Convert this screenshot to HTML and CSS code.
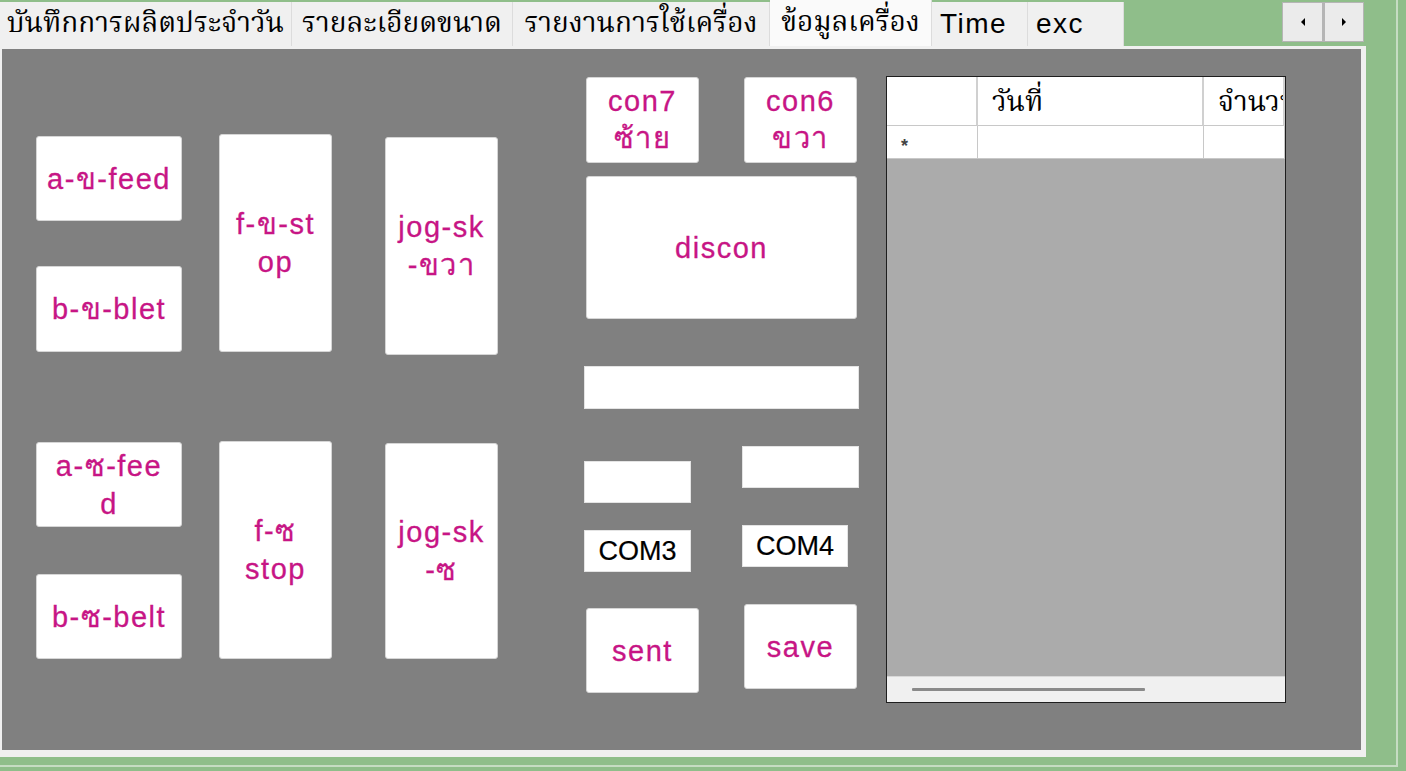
FILE: index.html
```html
<!DOCTYPE html>
<html lang="th">
<head>
<meta charset="utf-8">
<title>ข้อมูลเครื่อง</title>
<link rel="stylesheet" href="styles.css">
</head>
<body>
<div class="screen">
  <div class="tabbar">
    <div class="tab w1">บันทึกการผลิตประจำวัน</div>
    <div class="tab w2">รายละเอียดขนาด</div>
    <div class="tab w3">รายงานการใช้เครื่อง</div>
    <div class="tab w4 sel">ข้อมูลเครื่อง</div>
    <div class="tab w5 latin">Time</div>
    <div class="tab w6 latin">exc</div>
    <div class="spacer"></div>
    <div class="scroller">
      <div class="sbtn"><svg width="6" height="8" viewBox="0 0 6 8"><path d="M5 0 L1 4 L5 8 Z" fill="#000"/></svg></div>
      <div class="sbtn"><svg width="6" height="8" viewBox="0 0 6 8"><path d="M1 0 L5 4 L1 8 Z" fill="#000"/></svg></div>
    </div>
  </div>
  <div class="panel">
    <div class="canvas">
      <div class="col col1">
        <div class="btn b-a1">a-ข-feed</div>
        <div class="btn b-a2">b-ข-blet</div>
        <div class="btn b-a3">a-ซ-fee<br>d</div>
        <div class="btn b-a4">b-ซ-belt</div>
      </div>
      <div class="col col2">
        <div class="btn tall">f-ข-st<br>op</div>
        <div class="btn tall b-f2">f-ซ<br>stop</div>
      </div>
      <div class="col col3">
        <div class="btn tall">jog-sk<br>-ขวา</div>
        <div class="btn tall b-j2">jog-sk<br>-ซ</div>
      </div>
      <div class="col col4">
        <div class="conrow">
          <div class="btn con">con7<br>ซ้าย</div>
          <div class="btn con">con6<br>ขวา</div>
        </div>
        <div class="btn discon">discon</div>
        <div class="tbox wide"></div>
        <div class="subcols">
          <div class="sub subl">
            <div class="tbox small"></div>
            <div class="tbox small com">COM3</div>
            <div class="btn act">sent</div>
          </div>
          <div class="sub subr">
            <div class="tbox smallr"></div>
            <div class="tbox com com4">COM4</div>
            <div class="btn act">save</div>
          </div>
        </div>
      </div>
      <div class="col col5">
        <div class="grid">
          <div class="grow head">
            <div class="cell rh"></div>
            <div class="cell c1">วันที่</div>
            <div class="cell c2">จำนวน</div>
          </div>
          <div class="grow data">
            <div class="cell rh"><span class="star">*</span></div>
            <div class="cell c1"></div>
            <div class="cell c2"></div>
          </div>
          <div class="gfill"></div>
          <div class="hscroll"><div class="thumb"></div></div>
        </div>
      </div>
    </div>
  </div>
</div>
</body>
</html>
```

FILE: styles.css
```css
html, body {
  margin: 0;
  padding: 0;
}
body {
  background: #8fbe8a;
  width: 1406px;
  height: 771px;
  overflow: hidden;
  font-family: "Liberation Sans", Arial, sans-serif;
}
.screen {
  width: 1396px;
  height: 765px;
  border-right: 2px solid #c6dcc3;
  border-bottom: 2px solid #c6dcc3;
}
.tabbar {
  display: flex;
  height: 46px;
  align-items: flex-end;
}
.tab {
  height: 44px;
  background: #f0f0f0;
  border-right: 1px solid #dcdcdc;
  box-sizing: border-box;
  display: flex;
  align-items: center;
  justify-content: center;
  font-family: "Liberation Serif", "Norasi", "Noto Serif Thai", serif;
  font-size: 28px;
  color: #000;
  white-space: nowrap;
  overflow: hidden;
}
.tab.latin {
  font-family: "Liberation Sans", Arial, sans-serif;
  font-size: 28px;
  letter-spacing: 1.5px;
  justify-content: flex-start;
  padding-left: 8px;
}
.tab.sel {
  height: 46px;
  background: #fafafa;
}
.w1 { width: 292px; }
.w2 { width: 221px; }
.w3 { width: 257px; }
.w4 { width: 162px; }
.w5 { width: 96px; }
.w6 { width: 96px; }
.spacer { flex: 1; }
.scroller {
  display: flex;
  align-self: flex-start;
  margin-top: 2px;
  margin-right: 32px;
}
.sbtn {
  width: 41px;
  height: 40px;
  box-sizing: border-box;
  background: #ebebeb;
  border: 1px solid #b5b5b5;
  display: flex;
  align-items: center;
  justify-content: center;
}
.sbtn + .sbtn { border-left: 2px solid #b5b5b5; }

.panel {
  width: 1366px;
  height: 711px;
  box-sizing: border-box;
  background: #f0f0f0;
  padding: 3px 5px 7px 2px;
}
.canvas {
  width: 100%;
  height: 100%;
  background: #808080;
  display: flex;
  align-items: flex-start;
}
.col {
  display: flex;
  flex-direction: column;
}
.btn {
  background: #fff;
  border: 1px solid #d6d6d6;
  border-radius: 3px;
  box-sizing: border-box;
  color: #c71585;
  font-size: 29px;
  letter-spacing: 1.5px;
  line-height: 38px;
  text-align: center;
  display: flex;
  align-items: center;
  justify-content: center;
  -webkit-text-stroke: 0.3px #c71585;
}
.col1 { margin-left: 34px; padding-top: 87px; width: 146px; }
.col1 .btn { height: 85px; }
.b-a2 { margin-top: 45px; height: 86px !important; }
.b-a3 { margin-top: 90px; }
.b-a4 { margin-top: 47px; }

.col2 { margin-left: 37px; padding-top: 85px; width: 113px; }
.tall { height: 218px; }
.b-f2 { margin-top: 89px; }
.col3 { margin-left: 53px; padding-top: 88px; width: 113px; }
.b-j2 { margin-top: 88px; height: 216px; }

.col4 { margin-left: 86px; padding-top: 28px; width: 275px; }
.conrow {
  display: flex;
  gap: 45px;
  padding-left: 2px;
}
.con { width: 113px; height: 86px; line-height: 37px; }
.discon { margin: 13px 0 0 2px; width: 271px; height: 143px; }
.tbox {
  background: #fff;
  border: 1px solid #e4e4e4;
  box-sizing: border-box;
}
.wide { margin-top: 47px; height: 43px; }
.subcols { display: flex; align-items: flex-start; }
.sub { display: flex; flex-direction: column; }
.subl { width: 115px; margin-top: 52px; }
.subr { width: 117px; margin-left: 43px; margin-top: 37px; }
.small { width: 107px; height: 42px; }
.smallr { width: 117px; height: 42px; }
.com {
  width: 107px;
  height: 42px;
  margin-top: 27px;
  display: flex;
  align-items: center;
  justify-content: center;
  font-size: 27px;
  color: #000;
  -webkit-text-stroke: 0.2px #000;
}
.com4 { width: 106px; margin-top: 37px; }
.act { width: 113px; height: 85px; margin-left: 2px; }
.subl .act { margin-top: 36px; }
.subr .act { margin-top: 37px; }

.col5 { margin-left: 27px; padding-top: 27px; }
.grid {
  width: 400px;
  height: 627px;
  box-sizing: border-box;
  border: 1px solid #1e1e1e;
  background: #ababab;
  display: flex;
  flex-direction: column;
  overflow: hidden;
}
.grow { display: flex; }
.head { height: 49px; }
.data { height: 33px; }
.cell {
  background: #fff;
  box-sizing: border-box;
  border-right: 1px solid #c8c8c8;
  border-bottom: 1px solid #c8c8c8;
  font-family: "Liberation Serif", "Norasi", "Noto Serif Thai", serif;
  font-size: 28px;
  color: #000;
  white-space: nowrap;
  overflow: hidden;
}
.head .cell { padding: 4px 0 0 14px; border-right: 2px solid #d0d0d0; }
.rh { width: 91px; flex: none; }
.c1 { width: 226px; flex: none; }
.c2 { flex: 1; }
.head .rh { padding: 0; }
.star {
  display: block;
  font-family: "Liberation Sans", sans-serif;
  font-size: 18px;
  font-weight: bold;
  color: #444;
  margin: 10px 0 0 14px;
}
.gfill { flex: 1; }
.hscroll {
  height: 26px;
  background: #f0f0f0;
  border-top: 1px solid #d8d8d8;
  box-sizing: border-box;
  padding: 11px 0 0 25px;
}
.thumb {
  width: 233px;
  height: 3px;
  background: #8a8a8a;
  border-radius: 1px;
}
```
